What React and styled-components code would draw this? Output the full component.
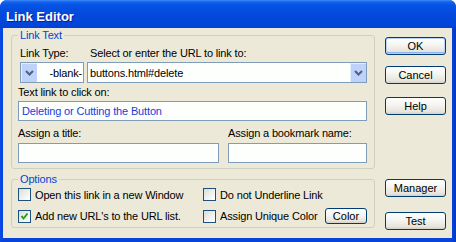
import React from 'react';
import styled, { createGlobalStyle } from 'styled-components';

const GlobalStyle = createGlobalStyle`
  html, body {
    margin: 0;
    padding: 0;
    background: #ffffff;
  }
  body {
    font-family: "Liberation Sans", Arial, sans-serif;
    font-size: 11px;
    letter-spacing: -0.15px;
    color: #000;
  }
`;

const Window = styled.div`
  width: 456px;
  height: 242px;
  box-sizing: border-box;
  display: flex;
  flex-direction: column;
  border-radius: 7px 7px 0 0;
  overflow: hidden;
  background: #0843da;
`;

const TitleBar = styled.div`
  height: 28px;
  flex: none;
  box-sizing: border-box;
  padding: 9px 6px 0;
  background: linear-gradient(180deg, #3d8bf7 0px, #1262ee 2px, #0554e4 5px, #0349dc 14px, #0344d8 25px, #0340d0 28px);
  color: #fff;
  font: bold 13px/15px "Liberation Sans", Arial, sans-serif;
  letter-spacing: 0;
  text-shadow: 1px 1px 0 #0a1d8f;
`;

const Frame = styled.div`
  flex: 1;
  display: flex;
  padding: 0 4px 4px 3px;
  background: linear-gradient(90deg, #0a4ae6 0px, #0843da 3px, #0843da 452px, #0336c4 456px);
`;

const Client = styled.div`
  flex: 1;
  display: flex;
  background: #ece9d8;
  padding: 1px 6px 8px 8px;
`;

const LeftColumn = styled.div`
  width: 364px;
  display: flex;
  flex-direction: column;
  gap: 4px;
`;

const RightColumn = styled.div`
  width: 61px;
  margin-left: 10px;
  padding-top: 8px;
  display: flex;
  flex-direction: column;
  justify-content: space-between;
`;

const ButtonStack = styled.div`
  display: flex;
  flex-direction: column;
`;

const Group = styled.fieldset`
  margin: 0;
  min-width: 0;
  padding: ${p => p.$pad};
  border: 1px solid #d0d0bf;
  border-radius: 3px;
`;

const Legend = styled.legend`
  padding: 0 2px;
  color: #0046d5;
  font-size: 11px;
  line-height: 13px;
`;

const Label = styled.div`
  line-height: 13px;
  padding-left: ${p => p.$indent || 0}px;
  white-space: nowrap;
`;

const TopGrid = styled.div`
  display: grid;
  grid-template-columns: 64px 1fr;
  column-gap: 3px;
  row-gap: 2px;
  margin-left: 2px;
`;

const Combo = styled.div`
  height: 21px;
  box-sizing: border-box;
  border: 1px solid #7f9db9;
  background: #fdfffd;
  display: flex;
  align-items: stretch;
`;

const ComboText = styled.div`
  flex: 1;
  display: flex;
  align-items: center;
  padding: 0 ${p => p.$right ? '1px' : '2px'};
  justify-content: ${p => p.$right ? 'flex-end' : 'flex-start'};
  white-space: nowrap;
`;

const DropButton = styled.div`
  width: 16px;
  flex: none;
  box-sizing: border-box;
  background: #bfd2fa;
  box-shadow: inset 1px 1px 0 #e4ecfd;
  display: flex;
  align-items: center;
  justify-content: center;
`;

const Field = styled.div`
  display: flex;
  flex-direction: column;
  gap: ${p => p.$gap}px;
  margin-top: ${p => p.$mt}px;
`;

const TextBox = styled.div`
  height: 20px;
  box-sizing: border-box;
  border: 1px solid #7f9db9;
  background: #fdfffd;
  padding: 0 3px;
  display: flex;
  align-items: center;
  color: ${p => p.$color || '#000'};
  white-space: nowrap;
`;

const PairGrid = styled.div`
  display: grid;
  grid-template-columns: 201px 1fr;
  column-gap: 9px;
  margin-top: 6px;
`;

const OptionsGrid = styled.div`
  display: grid;
  grid-template-columns: 185px 1fr;
  grid-template-rows: 13px 16px;
  row-gap: 7px;
`;

const CheckRow = styled.div`
  display: flex;
  align-items: center;
  gap: 4px;
  white-space: nowrap;
`;

const Box = styled.span`
  width: 13px;
  height: 13px;
  flex: none;
  box-sizing: border-box;
  border: 1px solid #1c5180;
  background: linear-gradient(135deg, #dcdcd7 0%, #f2f2ef 60%, #ffffff 100%);
  display: flex;
  align-items: center;
  justify-content: center;
`;

const Button = styled.div`
  width: ${p => p.$w || 61}px;
  height: ${p => p.$h || 18}px;
  margin-top: ${p => p.$mt || 0}px;
  margin-left: ${p => p.$ml || 0};
  box-sizing: border-box;
  border: 1px solid #003c74;
  border-radius: 3px;
  background: linear-gradient(180deg, #ffffff 0%, #f4f4f0 45%, #e6e4db 85%, #d6d0c5 100%);
  box-shadow: ${p => p.$default
    ? 'inset 0 0 0 1px #b9d2f8, inset 0 -1px 0 1px #8fb1ea'
    : 'none'};
  display: flex;
  align-items: center;
  justify-content: center;
  font-size: 11px;
  letter-spacing: 0;
  flex: none;
`;

const Chevron = () => (
  <svg width="9" height="6" viewBox="0 0 9 6">
    <path d="M1 1 L4.5 4.5 L8 1" fill="none" stroke="#4d6185" strokeWidth="2" />
  </svg>
);

const Check = () => (
  <svg width="9" height="9" viewBox="0 0 9 9">
    <path d="M1.5 4 L3.5 6.5 L7.5 1.5" fill="none" stroke="#21a121" strokeWidth="2" />
  </svg>
);

const Checkbox = ({ checked, children }) => (
  <CheckRow>
    <Box>{checked && <Check />}</Box>
    <span>{children}</span>
  </CheckRow>
);

export default function App() {
  return (
    <>
      <GlobalStyle />
      <Window>
        <TitleBar>Link Editor</TitleBar>
        <Frame>
          <Client>
            <LeftColumn>
              <Group $pad="5px 7px 5px 6px">
                <Legend>Link Text</Legend>
                <TopGrid>
                  <Label $indent={0}>Link Type:</Label>
                  <Label $indent={3}>Select or enter the URL to link to:</Label>
                  <Combo>
                    <DropButton><Chevron /></DropButton>
                    <ComboText $right>-blank-</ComboText>
                  </Combo>
                  <Combo>
                    <ComboText>buttons.html#delete</ComboText>
                    <DropButton><Chevron /></DropButton>
                  </Combo>
                </TopGrid>
                <Field $gap={2} $mt={3}>
                  <Label>Text link to click on:</Label>
                  <TextBox $color="#1a3cdb">Deleting or Cutting the Button</TextBox>
                </Field>
                <PairGrid>
                  <Field $gap={3} $mt={0}>
                    <Label>Assign a title:</Label>
                    <TextBox />
                  </Field>
                  <Field $gap={3} $mt={0}>
                    <Label>Assign a bookmark name:</Label>
                    <TextBox />
                  </Field>
                </PairGrid>
              </Group>
              <Group $pad="2px 7px 3px 6px">
                <Legend>Options</Legend>
                <OptionsGrid>
                  <Checkbox>Open this link in a new Window</Checkbox>
                  <Checkbox>Do not Underline Link</Checkbox>
                  <Checkbox checked>Add new URL's to the URL list.</Checkbox>
                  <CheckRow>
                    <Box />
                    <span>Assign Unique Color</span>
                    <Button $w={42} $h={16} $ml="auto">Color</Button>
                  </CheckRow>
                </OptionsGrid>
              </Group>
            </LeftColumn>
            <RightColumn>
              <ButtonStack>
                <Button $default>OK</Button>
                <Button $mt={11}>Cancel</Button>
                <Button $mt={13}>Help</Button>
              </ButtonStack>
              <ButtonStack>
                <Button>Manager</Button>
                <Button $mt={15}>Test</Button>
              </ButtonStack>
            </RightColumn>
          </Client>
        </Frame>
      </Window>
    </>
  );
}
